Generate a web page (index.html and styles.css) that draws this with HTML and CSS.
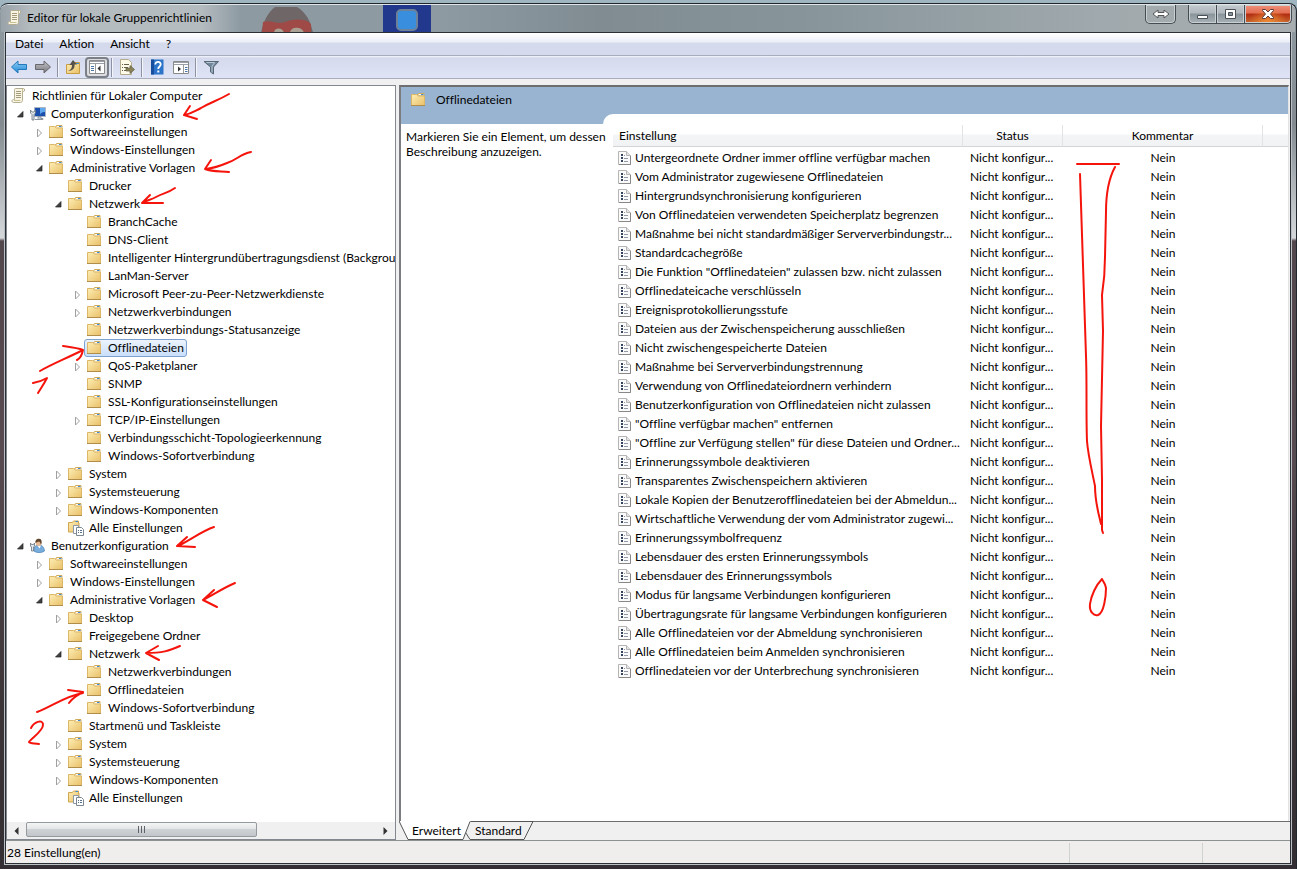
FILE: index.html
```html
<!DOCTYPE html>
<html lang="de">
<head>
<meta charset="utf-8">
<title>Editor für lokale Gruppenrichtlinien</title>
<link rel="stylesheet" href="styles.css">
</head>
<body>
<svg class="defs" aria-hidden="true">
  <defs>
    <linearGradient id="gold" x1="0" y1="0" x2="1" y2="1"><stop offset="0" stop-color="#fdeeb5"/><stop offset="1" stop-color="#e9c068"/></linearGradient>
    <linearGradient id="sky" x1="0" y1="0" x2="0" y2="1"><stop offset="0" stop-color="#8fd0f5"/><stop offset="1" stop-color="#1c86d6"/></linearGradient>
    <linearGradient id="steel" x1="0" y1="0" x2="0" y2="1"><stop offset="0" stop-color="#c4c4c8"/><stop offset="1" stop-color="#77777c"/></linearGradient>
  </defs>
  <symbol id="folder" viewBox="0 0 16 16">
    <path d="M6 3.500 7.500 1.500h5.500v2" fill="#f3d88f" stroke="#d0ab5c"/>
    <path d="M8 2.500h4.500" stroke="#fff"/><path d="M10 2.500h2.500" stroke="#3f8ad0"/>
    <path d="M.5 2.500h5l2 1.500h6v9.500h-13z" fill="url(#gold)" stroke="#dcb767"/>
    <path d="M0 13.500h14" stroke="#b08d4a"/>
  </symbol>
  <symbol id="folders" viewBox="0 0 16 16">
    <path d="M.5 2.500h4l1-1.500h5v2h.5v9h-10.500z" fill="url(#gold)" stroke="#d0a650"/>
    <path d="M7.500 1.500h2.500" stroke="#3f8ad0"/>
    <path d="M5.500 5.500h5v8h-5z" fill="#fff" stroke="#8d9aa6"/>
    <path d="M8.500 7.500h5l2 2v6h-7z" fill="#fff" stroke="#7b8894"/>
    <path d="M10 10.500h1m1 0h2M10 12.500h1m1 0h2" stroke="#58718c"/>
  </symbol>
  <symbol id="scroll" viewBox="0 0 16 16">
    <path d="M4.500.500h8c1.500 0 1.500 3 0 3h-1v9c0 1-1 2-2 2h-7c-2 0-2-3 0-3h1v-9c0-1 0-2 1-2z" fill="#f9f5e3" stroke="#b5ad92"/>
    <path d="M3 12.500h6.500M11.500 1v3" stroke="#cbbf96"/>
    <path d="M5 3.500h5M5 5.500h5M5 7.500h5M5 9.500h5" stroke="#a39b7c"/>
  </symbol>
  <symbol id="computer" viewBox="0 0 16 16">
    <path d="M4.500 1.500h11v9h-11z" fill="#1b4fae" stroke="#a9b6c6"/>
    <path d="M10 2h5v4c-3 0-5 1-5 4z" fill="#5da8ee"/>
    <path d="M5 13.500h8v-1h-2v-2H8v2" fill="#bcc4cc" stroke="#8b96a2"/>
    <path d="M.5 4v3L2 8.500V14h2V8.500L5.500 7V4L4 6H2z" fill="#e1e7ed" stroke="#66727e" stroke-width=".8"/>
  </symbol>
  <symbol id="user" viewBox="0 0 16 16">
    <path d="M4 13c0-5 2-6 5-6s5 2 5.500 6c-3 2-8 2-10.500 0z" fill="#78aedd" stroke="#4e83b5" stroke-width=".8"/>
    <path d="m7.500 7.500 2 3 1.500-3z" fill="#fff"/>
    <ellipse cx="8.500" cy="4.500" rx="2.800" ry="3.500" fill="#e7b992"/>
    <path d="M5.500 5C5 1 8 .5 10 1c2 .5 2 4 1 6-.5-2-1-3-2-3.500-1 .5-2 .5-3.500 1.500z" fill="#60452d"/>
    <path d="M.5 5v3l1 1v4h2V9l1-1V5l-1 1.500h-2z" fill="#e4e9ee" stroke="#66727e" stroke-width=".8"/>
  </symbol>
  <symbol id="closed" viewBox="0 0 10 10"><path d="m3.500 1 4 4-4 4z" fill="#fff" stroke="#a0a0a0"/></symbol>
  <symbol id="open" viewBox="0 0 10 10"><path d="M8 1.500V7H2.500z" fill="#404040" stroke="#222" stroke-width=".7"/></symbol>
  <symbol id="policy" viewBox="0 0 14 16">
    <path d="M.5 1.500h8l4 4v9H.5z" fill="#fafafa" stroke="#b5b5b5"/><path d="M8.500 1.500v4h4" fill="#e4e4e4" stroke="#b5b5b5"/>
    <path d="M1 14.500h11.500V6" fill="none" stroke="#888"/>
    <path d="M3 4h2v2H3zM3 7h2v2H3zM3 10h2v2H3z" fill="#33445c"/>
    <path d="M6 5.500h1M6 8.500h4M6 11.500h4" stroke="#8f98a6"/>
  </symbol>
</svg>

<div class="window">
  <header class="titlebar">
    <svg class="backdrop" width="440" height="31" aria-hidden="true">
      <path d="M260 28c2-10 6-20 14-26h22c10 6 14 16 16 26z" fill="#6f6668"/>
      <path d="M262 17c7-3 14 3 22 0s20-4 26 2v9h-49z" fill="#a04a47"/>
      <path d="M273 28c0-6 9-6 10 0zM289 28c0-7 13-7 14 0z" fill="#a9a294"/>
      <path d="M382 0h48v31h-48z" fill="#22388c"/>
      <rect x="396" y="5" width="20" height="20" rx="4" fill="#398fdd" stroke="#6d8199" stroke-width="2"/>
    </svg>
    <svg class="icon"><use href="#scroll"/></svg>
    <h1>Editor für lokale Gruppenrichtlinien</h1>
    <div class="controls">
      <button class="swap" aria-label="Umschalten"><svg width="18" height="10"><path d="M1 5l5-4v2.500h6V1l5 4-5 4V6.500H6V9z" fill="#fff" stroke="#555"/></svg></button>
      <button class="min" aria-label="Minimieren"><svg width="13" height="12"><path d="M1.500 7.500h10v3h-10z" fill="#fff" stroke="#4a5058"/></svg></button>
      <button class="max" aria-label="Maximieren"><svg width="13" height="12"><path d="M1.500 1.500h10v9h-10z" fill="#fff" stroke="#4a5058"/><path d="M4.500 4.500h4v3h-4z" fill="#8a949c" stroke="#4a5058"/></svg></button>
      <button class="close" aria-label="Schließen"><svg width="14" height="12"><path d="M1.500 1.500h3l2.500 2.500 2.500-2.500h3v1L9.500 6l3 3.500v1h-3L7 8l-2.500 2.500h-3v-1L4.500 6l-3-3.500z" fill="#fff" stroke="#5a3a3a"/></svg></button>
    </div>
  </header>

  <div class="client">
    <nav class="menubar"><button>Datei</button><button>Aktion</button><button>Ansicht</button><button>?</button></nav>
    <div class="toolbar">
      <button aria-label="Zurück"><svg class="icon" viewBox="0 0 16 16"><path d="M.5 8 7 2v3.500h8.500v5H7V14z" fill="url(#sky)" stroke="#2479ba"/></svg></button>
      <button aria-label="Vorwärts"><svg class="icon" viewBox="0 0 16 16"><path d="M15.500 8 9 2v3.500H.5v5H9V14z" fill="url(#steel)" stroke="#67676c"/></svg></button>
      <span class="sep"></span>
      <button aria-label="Eine Ebene nach oben"><svg class="icon" viewBox="0 0 16 16"><path d="M1.500 5.500h6l1-2h6v11h-13z" fill="url(#gold)" stroke="#c99d42"/><path d="M11 4.500h3" stroke="#3f8ad0"/><path d="M3 12c3-1 4-3 4-6H4.500L8 1l4 4.500H9.500C10 9 8 12 3 12z" fill="#57534a"/></svg></button>
      <button class="pressed" aria-label="Konsolenstruktur" aria-pressed="true"><svg class="icon" viewBox="0 0 16 16"><path d="M.5 1.500h15v13H.5z" fill="#fff" stroke="#8a8a8a"/><path d="M1 2.500h14M1 4.500h14" stroke="#9a9fa8"/><path d="M2 7.500h3M2 9.500h3M2 11.500h3" stroke="#4b77ab"/><path d="M6.500 5v9" stroke="#999"/><path d="M11.500 6.500v6l-3-3z" fill="#333"/></svg></button>
      <span class="sep"></span>
      <button aria-label="Liste exportieren"><svg class="icon" viewBox="0 0 16 16"><path d="M1.500.500h8l3 3v12h-11z" fill="#fffbe8" stroke="#b4aa8c"/><path d="M3 5.500h1m1 0h5M3 8.500h1m1 0h4M3 11.500h1m1 0h4" stroke="#665f4e"/><path d="M7 9h4V6.500l4.500 4-4.500 4V12H7z" fill="#8b8358" stroke="#5f5b45" stroke-width=".7"/></svg></button>
      <span class="sep"></span>
      <button aria-label="Hilfe"><svg class="icon" viewBox="0 0 16 16"><path d="M2 .5h12.500v15H2z" fill="#2b74c9"/><path d="M2 .5h3v15H2z" fill="#174f9e"/><path d="M6.300 5.500c0-3.600 5.400-3.400 5.400 0 0 2-2.500 2-2.500 4.500" fill="none" stroke="#fff" stroke-width="1.800"/><path d="M8.300 11.500h2v2h-2z" fill="#fff"/></svg></button>
      <button aria-label="Aktionsbereich"><svg class="icon" viewBox="0 0 16 16"><path d="M.5 2.500h15v12H.5z" fill="#fff" stroke="#8a8a8a"/><path d="M1 3.500h14M1 5.500h14" stroke="#9a9fa8"/><path d="M10.500 6v8" stroke="#999"/><path d="M12 8.500h2.500M12 10.500h2.500M12 12.500h2.500" stroke="#4b77ab"/><path d="M5 7.500v5L8 10z" fill="#333"/></svg></button>
      <span class="sep"></span>
      <button aria-label="Filter"><svg class="icon" viewBox="0 0 16 16"><path d="M1 2.500h14.500L10.500 8v7l-3-2V8z" fill="#71889c" stroke="#566777"/><path d="M3.500 3.500h8L9 7.500v6" fill="none" stroke="#b9c8d4"/></svg></button>
    </div>

    <main class="panes">
      <section class="tree-pane">
        <ul class="tree root">
          <li><div class="row base"><svg class="icon"><use href="#scroll"/></svg><span>Richtlinien für Lokaler Computer</span></div>
            <ul class="top">
              <li><div class="row"><svg class="tw"><use href="#open"/></svg><svg class="icon"><use href="#computer"/></svg><span>Computerkonfiguration</span></div>
                <ul>
                  <li class="row"><svg class="tw"><use href="#closed"/></svg><svg class="icon"><use href="#folder"/></svg><span>Softwareeinstellungen</span></li>
                  <li class="row"><svg class="tw"><use href="#closed"/></svg><svg class="icon"><use href="#folder"/></svg><span>Windows-Einstellungen</span></li>
                  <li><div class="row"><svg class="tw"><use href="#open"/></svg><svg class="icon"><use href="#folder"/></svg><span>Administrative Vorlagen</span></div>
                    <ul>
                      <li class="row leaf"><svg class="icon"><use href="#folder"/></svg><span>Drucker</span></li>
                      <li><div class="row"><svg class="tw"><use href="#open"/></svg><svg class="icon"><use href="#folder"/></svg><span>Netzwerk</span></div>
                        <ul>
                          <li class="row leaf"><svg class="icon"><use href="#folder"/></svg><span>BranchCache</span></li>
                          <li class="row leaf"><svg class="icon"><use href="#folder"/></svg><span>DNS-Client</span></li>
                          <li class="row leaf"><svg class="icon"><use href="#folder"/></svg><span>Intelligenter Hintergrundübertragungsdienst (Backgrou</span></li>
                          <li class="row leaf"><svg class="icon"><use href="#folder"/></svg><span>LanMan-Server</span></li>
                          <li class="row"><svg class="tw"><use href="#closed"/></svg><svg class="icon"><use href="#folder"/></svg><span>Microsoft Peer-zu-Peer-Netzwerkdienste</span></li>
                          <li class="row"><svg class="tw"><use href="#closed"/></svg><svg class="icon"><use href="#folder"/></svg><span>Netzwerkverbindungen</span></li>
                          <li class="row leaf"><svg class="icon"><use href="#folder"/></svg><span>Netzwerkverbindungs-Statusanzeige</span></li>
                          <li class="row leaf"><div class="selected"><svg class="icon"><use href="#folder"/></svg><span>Offlinedateien</span></div></li>
                          <li class="row"><svg class="tw"><use href="#closed"/></svg><svg class="icon"><use href="#folder"/></svg><span>QoS-Paketplaner</span></li>
                          <li class="row leaf"><svg class="icon"><use href="#folder"/></svg><span>SNMP</span></li>
                          <li class="row leaf"><svg class="icon"><use href="#folder"/></svg><span>SSL-Konfigurationseinstellungen</span></li>
                          <li class="row"><svg class="tw"><use href="#closed"/></svg><svg class="icon"><use href="#folder"/></svg><span>TCP/IP-Einstellungen</span></li>
                          <li class="row leaf"><svg class="icon"><use href="#folder"/></svg><span>Verbindungsschicht-Topologieerkennung</span></li>
                          <li class="row leaf"><svg class="icon"><use href="#folder"/></svg><span>Windows-Sofortverbindung</span></li>
                        </ul>
                      </li>
                      <li class="row"><svg class="tw"><use href="#closed"/></svg><svg class="icon"><use href="#folder"/></svg><span>System</span></li>
                      <li class="row"><svg class="tw"><use href="#closed"/></svg><svg class="icon"><use href="#folder"/></svg><span>Systemsteuerung</span></li>
                      <li class="row"><svg class="tw"><use href="#closed"/></svg><svg class="icon"><use href="#folder"/></svg><span>Windows-Komponenten</span></li>
                      <li class="row leaf"><svg class="icon"><use href="#folders"/></svg><span>Alle Einstellungen</span></li>
                    </ul>
                  </li>
                </ul>
              </li>
              <li><div class="row"><svg class="tw"><use href="#open"/></svg><svg class="icon"><use href="#user"/></svg><span>Benutzerkonfiguration</span></div>
                <ul>
                  <li class="row"><svg class="tw"><use href="#closed"/></svg><svg class="icon"><use href="#folder"/></svg><span>Softwareeinstellungen</span></li>
                  <li class="row"><svg class="tw"><use href="#closed"/></svg><svg class="icon"><use href="#folder"/></svg><span>Windows-Einstellungen</span></li>
                  <li><div class="row"><svg class="tw"><use href="#open"/></svg><svg class="icon"><use href="#folder"/></svg><span>Administrative Vorlagen</span></div>
                    <ul>
                      <li class="row"><svg class="tw"><use href="#closed"/></svg><svg class="icon"><use href="#folder"/></svg><span>Desktop</span></li>
                      <li class="row leaf"><svg class="icon"><use href="#folder"/></svg><span>Freigegebene Ordner</span></li>
                      <li><div class="row"><svg class="tw"><use href="#open"/></svg><svg class="icon"><use href="#folder"/></svg><span>Netzwerk</span></div>
                        <ul>
                          <li class="row leaf"><svg class="icon"><use href="#folder"/></svg><span>Netzwerkverbindungen</span></li>
                          <li class="row leaf"><svg class="icon"><use href="#folder"/></svg><span>Offlinedateien</span></li>
                          <li class="row leaf"><svg class="icon"><use href="#folder"/></svg><span>Windows-Sofortverbindung</span></li>
                        </ul>
                      </li>
                      <li class="row leaf"><svg class="icon"><use href="#folder"/></svg><span>Startmenü und Taskleiste</span></li>
                      <li class="row"><svg class="tw"><use href="#closed"/></svg><svg class="icon"><use href="#folder"/></svg><span>System</span></li>
                      <li class="row"><svg class="tw"><use href="#closed"/></svg><svg class="icon"><use href="#folder"/></svg><span>Systemsteuerung</span></li>
                      <li class="row"><svg class="tw"><use href="#closed"/></svg><svg class="icon"><use href="#folder"/></svg><span>Windows-Komponenten</span></li>
                      <li class="row leaf"><svg class="icon"><use href="#folders"/></svg><span>Alle Einstellungen</span></li>
                    </ul>
                  </li>
                </ul>
              </li>
            </ul>
          </li>
        </ul>
        <div class="scrollbar">
          <button aria-label="Nach links"><svg width="5" height="8"><path d="M4.500 0v8L.5 4z" fill="#333"/></svg></button>
          <div class="track"><div class="thumb"><svg width="9" height="7"><path d="M1.500 0v7M4.500 0v7M7.500 0v7" stroke="#5c6268"/></svg></div></div>
          <button aria-label="Nach rechts"><svg width="5" height="8"><path d="M.5 0v8l4-4z" fill="#333"/></svg></button>
        </div>
      </section>

      <section class="detail">
        <div class="result">
          <h2><svg class="icon"><use href="#folder"/></svg>Offlinedateien</h2>
          <div class="extended">
            <p class="hint">Markieren Sie ein Element, um dessen Beschreibung anzuzeigen.</p>
            <div class="list">
              <table>
                <colgroup><col class="c-name"><col class="c-status"><col class="c-comment"><col></colgroup>
                <thead><tr><th>Einstellung</th><th>Status</th><th>Kommentar</th><th></th></tr></thead>
                <tbody>
                  <tr><td><svg class="pol"><use href="#policy"/></svg>Untergeordnete Ordner immer offline verfügbar machen</td><td>Nicht konfigur...</td><td>Nein</td><td></td></tr>
                  <tr><td><svg class="pol"><use href="#policy"/></svg>Vom Administrator zugewiesene Offlinedateien</td><td>Nicht konfigur...</td><td>Nein</td><td></td></tr>
                  <tr><td><svg class="pol"><use href="#policy"/></svg>Hintergrundsynchronisierung konfigurieren</td><td>Nicht konfigur...</td><td>Nein</td><td></td></tr>
                  <tr><td><svg class="pol"><use href="#policy"/></svg>Von Offlinedateien verwendeten Speicherplatz begrenzen</td><td>Nicht konfigur...</td><td>Nein</td><td></td></tr>
                  <tr><td><svg class="pol"><use href="#policy"/></svg>Maßnahme bei nicht standardmäßiger Serververbindungstr...</td><td>Nicht konfigur...</td><td>Nein</td><td></td></tr>
                  <tr><td><svg class="pol"><use href="#policy"/></svg>Standardcachegröße</td><td>Nicht konfigur...</td><td>Nein</td><td></td></tr>
                  <tr><td><svg class="pol"><use href="#policy"/></svg>Die Funktion "Offlinedateien" zulassen bzw. nicht zulassen</td><td>Nicht konfigur...</td><td>Nein</td><td></td></tr>
                  <tr><td><svg class="pol"><use href="#policy"/></svg>Offlinedateicache verschlüsseln</td><td>Nicht konfigur...</td><td>Nein</td><td></td></tr>
                  <tr><td><svg class="pol"><use href="#policy"/></svg>Ereignisprotokollierungsstufe</td><td>Nicht konfigur...</td><td>Nein</td><td></td></tr>
                  <tr><td><svg class="pol"><use href="#policy"/></svg>Dateien aus der Zwischenspeicherung ausschließen</td><td>Nicht konfigur...</td><td>Nein</td><td></td></tr>
                  <tr><td><svg class="pol"><use href="#policy"/></svg>Nicht zwischengespeicherte Dateien</td><td>Nicht konfigur...</td><td>Nein</td><td></td></tr>
                  <tr><td><svg class="pol"><use href="#policy"/></svg>Maßnahme bei Serververbindungstrennung</td><td>Nicht konfigur...</td><td>Nein</td><td></td></tr>
                  <tr><td><svg class="pol"><use href="#policy"/></svg>Verwendung von Offlinedateiordnern verhindern</td><td>Nicht konfigur...</td><td>Nein</td><td></td></tr>
                  <tr><td><svg class="pol"><use href="#policy"/></svg>Benutzerkonfiguration von Offlinedateien nicht zulassen</td><td>Nicht konfigur...</td><td>Nein</td><td></td></tr>
                  <tr><td><svg class="pol"><use href="#policy"/></svg>"Offline verfügbar machen" entfernen</td><td>Nicht konfigur...</td><td>Nein</td><td></td></tr>
                  <tr><td><svg class="pol"><use href="#policy"/></svg>"Offline zur Verfügung stellen" für diese Dateien und Ordner...</td><td>Nicht konfigur...</td><td>Nein</td><td></td></tr>
                  <tr><td><svg class="pol"><use href="#policy"/></svg>Erinnerungssymbole deaktivieren</td><td>Nicht konfigur...</td><td>Nein</td><td></td></tr>
                  <tr><td><svg class="pol"><use href="#policy"/></svg>Transparentes Zwischenspeichern aktivieren</td><td>Nicht konfigur...</td><td>Nein</td><td></td></tr>
                  <tr><td><svg class="pol"><use href="#policy"/></svg>Lokale Kopien der Benutzerofflinedateien bei der Abmeldun...</td><td>Nicht konfigur...</td><td>Nein</td><td></td></tr>
                  <tr><td><svg class="pol"><use href="#policy"/></svg>Wirtschaftliche Verwendung der vom Administrator zugewi...</td><td>Nicht konfigur...</td><td>Nein</td><td></td></tr>
                  <tr><td><svg class="pol"><use href="#policy"/></svg>Erinnerungssymbolfrequenz</td><td>Nicht konfigur...</td><td>Nein</td><td></td></tr>
                  <tr><td><svg class="pol"><use href="#policy"/></svg>Lebensdauer des ersten Erinnerungssymbols</td><td>Nicht konfigur...</td><td>Nein</td><td></td></tr>
                  <tr><td><svg class="pol"><use href="#policy"/></svg>Lebensdauer des Erinnerungssymbols</td><td>Nicht konfigur...</td><td>Nein</td><td></td></tr>
                  <tr><td><svg class="pol"><use href="#policy"/></svg>Modus für langsame Verbindungen konfigurieren</td><td>Nicht konfigur...</td><td>Nein</td><td></td></tr>
                  <tr><td><svg class="pol"><use href="#policy"/></svg>Übertragungsrate für langsame Verbindungen konfigurieren</td><td>Nicht konfigur...</td><td>Nein</td><td></td></tr>
                  <tr><td><svg class="pol"><use href="#policy"/></svg>Alle Offlinedateien vor der Abmeldung synchronisieren</td><td>Nicht konfigur...</td><td>Nein</td><td></td></tr>
                  <tr><td><svg class="pol"><use href="#policy"/></svg>Alle Offlinedateien beim Anmelden synchronisieren</td><td>Nicht konfigur...</td><td>Nein</td><td></td></tr>
                  <tr><td><svg class="pol"><use href="#policy"/></svg>Offlinedateien vor der Unterbrechung synchronisieren</td><td>Nicht konfigur...</td><td>Nein</td><td></td></tr>
                </tbody>
              </table>
            </div>
          </div>
        </div>
        <div class="tabs">
          <svg width="136" height="19" aria-hidden="true">
            <path d="M65 9 71 .5h63L125 18.500H71z" fill="#f0f0f0" stroke="#555"/>
            <path d="M0-1 9 18.500h55L72-1z" fill="#fff"/><path d="M0 0l9 18.500h55L71 .5" fill="none" stroke="#555"/>
          </svg>
          <button>Erweitert</button><button>Standard</button>
        </div>
      </section>
    </main>

    <footer class="status"><span class="grow">28 Einstellung(en)</span><span class="cell wide"></span><span class="cell"></span></footer>
  </div>
</div>

<svg class="ink" width="1297" height="869" aria-hidden="true">
  <path d="M229 94c-12 7-18 8-28 14-8 4-10 6-17 7M190 106l-6 9 13 4"/>
  <path d="M251 152c-11 2-14 8-24 11-7 3-13 5-21 6M211 160l-6 9c8 3 16 2 24 3"/>
  <path d="M175 188c-7 5-12 5-19 9-5 3-9 3-14 6M150 195l-8 8h21"/>
  <path d="M40 371c12-7 25-12 43-21M63 346c7 1 15 2 20 4-1 5-2 8-6 10"/>
  <path d="M33 383c6-1 9-2 14-5-3 6-6 10-9 15"/>
  <path d="M214 527c-12 4-22 12-36 19M187 537l-10 9 18 1"/>
  <path d="M235 583c-12 5-20 11-32 17M214 590l-11 10 14 7"/>
  <path d="M180 646c-11 5-18 7-34 7M158 646l-12 7 13 7"/>
  <path d="M37 712c14-5 28-16 46-19M68 690l15 2c-5 3-10 5-14 11"/>
  <path d="M31 728c3-6 11-9 12-4 1 7-13 15-14 18 1 2 6 1 10 2"/>
  <path d="M1077 164h42M1080 174l6 182c1 25 0 60 1 85 1 14 5 30 8 45 0 16 3 25 6 38M1115 167c-6 11-9 25-9 45l-1 45c0 13-1 25-3 38l1 36-2 95 1 54v50l1 3"/>
  <path d="M1102 579c-6 6-11 17-12 25-1 8 4 12 8 11 6-2 8-19 8-27-1-6-3-6-4-9z"/>
</svg>
</body>
</html>
```

FILE: styles.css
```css
* { box-sizing: border-box; }
body {
  margin: 0;
  min-height: 100vh;
  display: flex;
  padding-top: 3px;
  background: #9fb5c0;
  font: 12px/18px Lato, "Noto Sans", sans-serif;
  font-variant-ligatures: none;
  color: #000;
}
button { border: 0; padding: 0; margin: 0; background: none; font: inherit; color: inherit; }
ul { list-style: none; margin: 0; padding: 0; }
.defs { position: absolute; width: 0; height: 0; }
.icon { width: 16px; height: 16px; flex: none; }

.window {
  flex: 1;
  min-width: 0;
  display: flex;
  flex-direction: column;
  padding: 0 5px 5px;
  border: 1px solid #20262b;
  border-bottom: 0;
  border-left: 0;
  border-radius: 8px 8px 0 0;
  box-shadow: inset 0 1px #dfe6ea;
  background: linear-gradient(#8f9aa1 0, #838b90 120px, #c3c8cc 210px, #d5d8da 234px, #52474c 237px, #574a50 450px, #3c3538 700px, #332e33 100%);
}
.titlebar {
  position: relative;
  display: flex;
  align-items: center;
  height: 27px;
  margin: 1px -4px 0;
  padding: 0 0 2px 6px;
  gap: 4px;
  border-radius: 7px 7px 0 0;
  background: linear-gradient(90deg, #98a2a8 0, #b5bcc0 30px, #b5bcc0 200px, #8d9aa2 240px, #8d9aa2 440px, #808c92 600px, #87959b 800px, #a0a9ad 1100px, #a8adb0 100%);
}
.titlebar .backdrop { position: absolute; left: 0; top: 0; height: 27px; }
.titlebar .icon, .titlebar h1 { position: relative; }
.titlebar h1 { flex: 1; margin: 0; font-size: 12px; font-weight: 400; }
.controls { display: flex; align-self: flex-start; height: 19px; margin-right: 3px; }
.controls button {
  display: flex;
  justify-content: center;
  align-items: center;
  width: 28px;
  border: 1px solid #454c52;
  border-top: 0;
  box-shadow: inset 0 0 0 1px #c9d0d4;
  background: linear-gradient(#c3cace 0, #b0b8bd 45%, #89949a 50%, #a7b1b6 100%);
}
.controls .swap { width: 31px; margin-right: 12px; border-radius: 0 0 5px 5px; background: #a3abaf; }
.controls .min { width: 29px; border-radius: 0 0 0 5px; }
.controls .max { border-left: 0; }
.controls .close { width: 47px; border-left: 0; border-radius: 0 0 5px; background: radial-gradient(ellipse at 50% 100%, #f08d35 0, transparent 60%), linear-gradient(#f0917c 0, #e26d52 45%, #b02c12 50%, #c9682e 100%); }

.client {
  flex: 1;
  display: flex;
  flex-direction: column;
  border: 1px solid #2b3036;
  background: #f0f0f0;
  box-shadow: 0 0 0 1px #b9bfc3;
}
.menubar {
  display: flex;
  height: 23px;
  padding-left: 1px;
  border-bottom: 1px solid #a9aebd;
  background: linear-gradient(#fff 0, #eceff8 9px, #d4daec 10px, #d5dbee 100%);
}
.menubar button { padding: 0 8px; }
.toolbar {
  display: flex;
  align-items: center;
  height: 23px;
  padding-left: 1px;
  border-bottom: 1px solid #a9aebd;
  background: linear-gradient(#f5f7fc 0, #d4d9ed 2px, #dee4f5 100%);
}
.toolbar button { display: flex; justify-content: center; align-items: center; width: 24px; height: 21px; }
.toolbar .pressed { border: 2px solid #7b8088; border-radius: 4px; background: #dcdde2; }
.sep { width: 2px; height: 19px; margin: 0 2px; border-left: 1px solid #8d93a3; border-right: 1px solid #f3f5fb; }

.panes { flex: 1; display: flex; gap: 3px; padding-top: 6px; }
.tree-pane {
  display: flex;
  flex-direction: column;
  width: 390px;
  border: 1px solid #828790;
  background: #fff;
}
.tree.root { flex: 1; overflow: hidden; padding-top: 1px; }
.tree ul { padding-left: 19px; }
.tree ul.top { padding-left: 8px; }
.row { display: flex; align-items: center; height: 18px; white-space: nowrap; }
.row .icon { margin-right: 5px; }
.row.base { padding-left: 4px; }
.row.leaf { padding-left: 15px; }
.tw { width: 10px; height: 10px; flex: none; margin: 2px 5px 0 0; }
.selected {
  display: flex;
  align-items: center;
  height: 18px;
  margin: 0 -3px;
  padding: 0 2px;
  border: 1px solid #7da2ce;
  border-radius: 3px;
  background: linear-gradient(#ecf3fd, #c9dffb);
}
.scrollbar { display: flex; height: 17px; background: #f0f0f0; }
.scrollbar button { display: flex; justify-content: center; align-items: center; width: 19px; }
.track { flex: 1; }
.thumb {
  display: flex;
  justify-content: center;
  align-items: center;
  width: 66%;
  height: 15px;
  border: 1px solid #959a9f;
  border-radius: 2px;
  background: linear-gradient(#f4f5f5 0, #e4e6e7 45%, #cfd2d5 50%, #c2c6ca 100%);
}

.detail { flex: 1; min-width: 0; display: flex; flex-direction: column; }
.result {
  flex: 1;
  display: flex;
  flex-direction: column;
  margin-right: 1px;
  border: solid #6c6e70;
  border-width: 2px 0 0 2px;
  border-left-color: #7b7d80;
  border-right: 1px solid #e3e3e3;
  background: #fff;
}
.result h2 {
  display: flex;
  align-items: center;
  gap: 9px;
  height: 37px;
  margin: 0;
  padding: 0 0 11px 10px;
  background: #99b4d1;
  font-size: 12px;
  font-weight: 400;
}
.extended { flex: 1; display: flex; }
.hint { position: relative; width: 212px; margin: 0; padding: 5px 0 0 5px; line-height: 15px; flex: none; }
.list {
  flex: 1;
  min-width: 0;
  margin: -10px 0 0 -10px;
  padding: 11px 0 0 10px;
  border-radius: 10px 0 0;
  background: #fff;
}
table { width: 100%; table-layout: fixed; border-collapse: separate; border-spacing: 0; }
.c-name { width: 350px; }
.c-status { width: 100px; }
.c-comment { width: 200px; }
th {
  height: 22px;
  padding: 0;
  border-right: 1px solid #e2e3e5;
  border-bottom: 1px solid #d5d5d5;
  background: linear-gradient(#fff 0, #fff 9px, #f4f5f7 10px, #f1f2f4 100%);
  font-weight: 400;
}
th:first-child { padding-left: 6px; text-align: left; }
th:last-child { border-right: 0; }
tbody::before { content: ""; display: block; height: 1px; }
td { height: 19px; padding: 0 0 0 7px; white-space: nowrap; overflow: hidden; }
td:first-child { padding-left: 5px; }
td:nth-child(3) { padding: 0; text-align: center; }
.pol { width: 14px; height: 16px; margin-right: 3px; vertical-align: -4px; }

.tabs { position: relative; display: flex; height: 19px; padding-left: 13px; gap: 14px; border-top: 1px solid #6c6e70; }
.tabs svg { position: absolute; left: 0; top: -1px; }
.tabs button { position: relative; line-height: 18px; }

.status { display: flex; height: 23px; border-top: 1px solid #8c9292; background: #f0eded; }
.status .grow { flex: 1; padding: 3px 1px; }
.status .cell { width: 88px; margin-top: 2px; border-left: 1px solid #cfd3d0; }
.status .wide { width: 133px; }

.ink { position: absolute; left: 0; top: 0; pointer-events: none; fill: none; stroke: #f5140c; stroke-width: 2; stroke-linecap: round; stroke-linejoin: round; }
```
